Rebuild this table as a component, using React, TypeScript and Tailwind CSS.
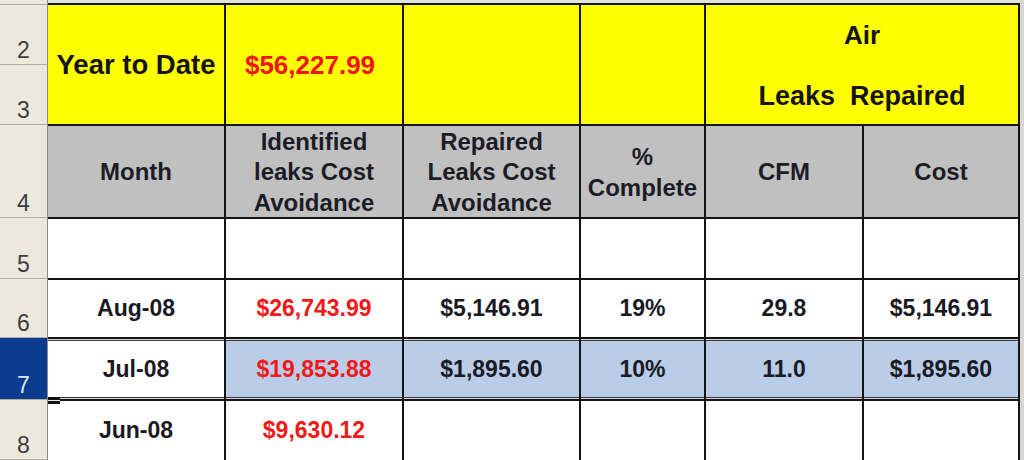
import React from "react";

const rowHeads: { n: string; h: string; sel?: boolean }[] = [
  { n: "", h: "h-[5px]" },
  { n: "2", h: "h-[60px]" },
  { n: "3", h: "h-[60px]" },
  { n: "4", h: "h-[93px]" },
  { n: "5", h: "h-[61px]" },
  { n: "6", h: "h-[59px]" },
  { n: "7", h: "h-[62px]", sel: true },
  { n: "8", h: "h-[60px]" },
];

const selShadow =
  "shadow-[inset_0_1px_0_#d6d6d6,inset_0_2px_0_#3a3a3a,inset_0_-1px_0_#d6d6d6,inset_0_-2px_0_#3a3a3a]";

function Cell({
  children,
  className = "",
}: {
  children?: React.ReactNode;
  className?: string;
}) {
  return (
    <div className={`flex items-center justify-center text-center ${className}`}>
      {children}
    </div>
  );
}

export default function App() {
  const data = [
    {
      m: "Aug-08",
      id: "$26,743.99",
      rep: "$5,146.91",
      pct: "19%",
      cfm: "29.8",
      cost: "$5,146.91",
      sel: false,
    },
    {
      m: "Jul-08",
      id: "$19,853.88",
      rep: "$1,895.60",
      pct: "10%",
      cfm: "11.0",
      cost: "$1,895.60",
      sel: true,
    },
    { m: "Jun-08", id: "$9,630.12", rep: "", pct: "", cfm: "", cost: "", sel: false },
  ];

  return (
    <div className="relative flex h-[460px] w-[1024px] overflow-hidden bg-[#d9d7d0] font-['Liberation_Sans',Arial,sans-serif]">
      {/* row headers */}
      <div className="flex w-[48px] flex-col border-r border-[#8a8a8a] bg-[#ece9dc]">
        {rowHeads.map((r, i) => (
          <div
            key={i}
            className={`${r.h} flex shrink-0 items-end justify-center border-b border-[#b3b0a3] pb-[2px] text-[23px] leading-none ${
              r.sel ? "bg-[#0b3b8f] text-[#dce6f5]" : "text-[#3c3c44]"
            }`}
          >
            {r.n}
          </div>
        ))}
      </div>

      {/* sheet */}
      <div className="flex flex-col">
        <div className="h-[3px] bg-[#e4e2dc]" />
        <div className="grid grid-cols-[176px_176px_175px_123px_156px_154px] grid-rows-[119px_91px_59px_57px_60px_59px] gap-[2px] bg-[#141414] pt-[2px] pr-[2px] font-bold">
          {/* yellow row */}
          <Cell className="bg-[#ffff00] text-[27.5px] text-[#141414]">Year to Date</Cell>
          <Cell className="bg-[#ffff00] pr-[8px] pt-[2px] text-[26px] text-[#f01414]">$56,227.99</Cell>
          <Cell className="bg-[#ffff00]" />
          <Cell className="bg-[#ffff00]" />
          <div className="col-span-2 flex flex-col items-center justify-center gap-[31px] bg-[#ffff00] pt-[1px] text-[27px] leading-[30px] text-[#141414]">
            <span className="text-[26px]">Air</span>
            <span className="whitespace-pre">Leaks  Repaired</span>
          </div>

          {/* gray header row */}
          {[
            ["Month"],
            ["Identified", "leaks Cost", "Avoidance"],
            ["Repaired", "Leaks Cost", "Avoidance"],
            ["%", "Complete"],
            ["CFM"],
            ["Cost"],
          ].map((lines, i) => (
            <div
              key={i}
              className="flex flex-col items-center justify-center bg-[#c0c0c0] pt-[2px] text-[24px] leading-[30.5px] text-[#1c1c26]"
            >
              {lines.map((l) => (
                <span key={l}>{l}</span>
              ))}
            </div>
          ))}

          {/* empty row 5 */}
          {Array.from({ length: 6 }).map((_, i) => (
            <div key={i} className="bg-white" />
          ))}

          {/* data rows */}
          {data.map((d) => {
            const bg = d.sel ? `bg-[#b9cce8] ${selShadow}` : "bg-white";
            const txt = "text-[23px] text-[#1a1a24]";
            return (
              <React.Fragment key={d.m}>
                <Cell className={`${d.sel ? `bg-white ${selShadow}` : "bg-white"} ${txt}`}>{d.m}</Cell>
                <Cell className={`${bg} text-[23px] text-[#f21818]`}>{d.id}</Cell>
                <Cell className={`${bg} ${txt}`}>{d.rep}</Cell>
                <Cell className={`${bg} ${txt}`}>{d.pct}</Cell>
                <Cell className={`${bg} ${txt}`}>{d.cfm}</Cell>
                <Cell className={`${bg} ${txt}`}>{d.cost}</Cell>
              </React.Fragment>
            );
          })}
        </div>
      </div>

      {/* fill handle marker */}
      <div className="absolute left-[48px] top-[397px] flex h-[7px] w-[12px] flex-col justify-center bg-[#111]">
        <div className="h-px w-full bg-[#e8e8e8]" />
      </div>
    </div>
  );
}
